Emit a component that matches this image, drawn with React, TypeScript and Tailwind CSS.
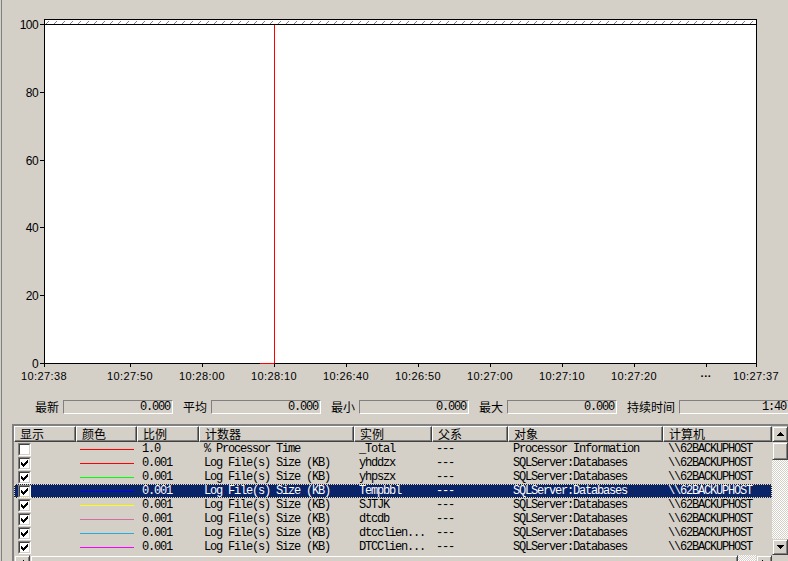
import clsx from "clsx";

type Row = {
  on: boolean;
  color: string;
  scale: string;
  counter: string;
  inst: string;
  obj: string;
  sel?: boolean;
};

const rows: Row[] = [
  { on: false, color: "bg-[#ff0000]", scale: "1.0", counter: "% Processor Time", inst: "_Total", obj: "Processor Information" },
  { on: true, color: "bg-[#ff0000]", scale: "0.001", counter: "Log File(s) Size (KB)", inst: "yhddzx", obj: "SQLServer:Databases" },
  { on: true, color: "bg-[#00ff00]", scale: "0.001", counter: "Log File(s) Size (KB)", inst: "yhpszx", obj: "SQLServer:Databases" },
  { on: true, color: "bg-[#0000ff]", scale: "0.001", counter: "Log File(s) Size (KB)", inst: "Tempbbl", obj: "SQLServer:Databases", sel: true },
  { on: true, color: "bg-[#ffff00]", scale: "0.001", counter: "Log File(s) Size (KB)", inst: "SJTJK", obj: "SQLServer:Databases" },
  { on: true, color: "bg-[#d070a0]", scale: "0.001", counter: "Log File(s) Size (KB)", inst: "dtcdb", obj: "SQLServer:Databases" },
  { on: true, color: "bg-[#20b0e0]", scale: "0.001", counter: "Log File(s) Size (KB)", inst: "dtcclien...", obj: "SQLServer:Databases" },
  { on: true, color: "bg-[#ff00ff]", scale: "0.001", counter: "Log File(s) Size (KB)", inst: "DTCClien...", obj: "SQLServer:Databases" },
];

const headers = ["显示", "颜色", "比例", "计数器", "实例", "父系", "对象", "计算机"];
const cols = "grid grid-cols-[62px_61px_62px_155px_78px_76px_155px_109px]";

const yTicks = [
  { y: 24, label: "100" },
  { y: 92, label: "80" },
  { y: 160, label: "60" },
  { y: 227, label: "40" },
  { y: 295, label: "20" },
  { y: 363, label: "0" },
];

const xTicks = [
  { x: 44, label: "10:27:38" },
  { x: 130, label: "10:27:50" },
  { x: 202, label: "10:28:00" },
  { x: 274, label: "10:28:10" },
  { x: 346, label: "10:26:40" },
  { x: 418, label: "10:26:50" },
  { x: 490, label: "10:27:00" },
  { x: 562, label: "10:27:10" },
  { x: 634, label: "10:27:20" },
  { x: 706, label: "···" },
  { x: 756, label: "10:27:37" },
];

const raised =
  "border border-t-[#d4d0c8] border-l-[#d4d0c8] border-b-[#404040] border-r-[#404040] shadow-[inset_1px_1px_0_#ffffff,inset_-1px_-1px_0_#808080] bg-[#d4d0c8]";
const checker =
  "bg-[image:repeating-conic-gradient(#ffffff_0%_25%,#d4d0c8_0%_50%)] bg-[length:2px_2px]";
const mono = "text-[12px] tracking-[-1.2px] font-['Liberation_Mono','Noto_Sans_CJK_SC',monospace]";

function Chart() {
  return (
    <svg
      width={786}
      height={400}
      viewBox="2 0 786 400"
      className="block shrink-0 font-['Liberation_Sans',sans-serif] text-[12px]"
    >
      <defs>
        <pattern id="hatch" x={45} y={20} width={8} height={4} patternUnits="userSpaceOnUse">
          <rect width={8} height={4} fill="#ffffff" />
          <path d="M1 4 L4 1" stroke="#808080" strokeWidth={1} />
        </pattern>
      </defs>
      <rect x={45} y={20} width={711} height={4} fill="url(#hatch)" />
      <rect x={45} y={25} width={711} height={338} fill="#ffffff" />
      <path d="M44.5 19 V363 M756.5 19 V363 M44 19.5 H757 M44 24.5 H757 M40 363.5 H757" stroke="#000" />
      {yTicks.map((t) => (
        <g key={t.label}>
          <path d={`M40 ${t.y + 0.5} H44`} stroke="#000" />
          <text x={38} y={t.y + 4.5} textAnchor="end" fill="#000" letterSpacing={-0.6}>
            {t.label}
          </text>
        </g>
      ))}
      {xTicks.map((t) => (
        <g key={t.x}>
          <path d={`M${t.x + 0.5} 364 V367`} stroke="#000" />
          <text
            x={t.x}
            y={380}
            textAnchor="middle"
            fill="#000"
            fontSize={11}
            fontWeight={t.label === "···" ? 700 : 400}
            letterSpacing={t.label === "···" ? 0 : 0.4}
          >
            {t.label}
          </text>
        </g>
      ))}
      <path d="M274.5 25 V363.5 M260 363.5 H274" stroke="#ff0000" />
    </svg>
  );
}

function Stat({ label, value, first }: { label: string; value: string; first?: boolean }) {
  return (
    <div className={clsx("flex items-center shrink-0", !first && "ml-[10px]")}>
      <span className="whitespace-nowrap text-[12px] leading-[14px] font-['Noto_Sans_CJK_SC',sans-serif] text-black">
        {label}
      </span>
      <div
        className={clsx(
          "ml-[4px] w-[110px] h-[14px] shrink-0 border border-t-[#808080] border-l-[#808080] border-b-white border-r-white text-right pr-[2px] leading-[12px]",
          mono
        )}
      >
        {value}
      </div>
    </div>
  );
}

function Checkbox({ on }: { on: boolean }) {
  return (
    <div className="w-[13px] h-[13px] border border-t-[#808080] border-l-[#808080] border-b-white border-r-white">
      <div className="w-full h-full border border-t-[#404040] border-l-[#404040] border-b-[#d4d0c8] border-r-[#d4d0c8] bg-white flex items-center justify-center">
        {on && (
          <svg width={7} height={7} viewBox="0 0 7 7">
            <path d="M6 0h1v3H6v1H5v1H4v1H3v1H2V6H1V5H0V2h1v1h1v1h1V3h1V2h1V1h1Z" fill="#000" />
          </svg>
        )}
      </div>
    </div>
  );
}

function Arrow({ dir }: { dir: "up" | "down" | "left" | "right" }) {
  const d = {
    up: "M3 0h1v1h1v1h1v1h1v1H0V3h1V2h1V1h1Z",
    down: "M0 0h7v1H6v1H5v1H4v1H3V3H2V2H1V1H0Z",
    left: "M3 0h1v7H3V6H2V5H1V4H0V3h1V2h1V1h1Z",
    right: "M0 0h1v1h1v1h1v1h1v1H3v1H2v1H1v1H0Z",
  }[dir];
  const vert = dir === "up" || dir === "down";
  return (
    <svg width={vert ? 7 : 4} height={vert ? 4 : 7} viewBox={vert ? "0 0 7 4" : "0 0 4 7"}>
      <path d={d} fill="#000" />
    </svg>
  );
}

export default function App() {
  return (
    <div className="w-[788px] h-[561px] overflow-hidden bg-[#d4d0c8] flex text-black">
      <div className="w-px shrink-0" />
      <div className="w-px shrink-0 bg-[#808080]" />
      <div className="flex flex-col w-[786px] shrink-0">
        <Chart />

        <div className="flex h-[14px] pl-[33px]">
          <Stat label="最新" value="0.000" first />
          <Stat label="平均" value="0.000" />
          <Stat label="最小" value="0.000" />
          <Stat label="最大" value="0.000" />
          <Stat label="持续时间" value="1:40" />
        </div>

        <div className="mt-[10px] ml-[10px] w-[778px] border-2 border-t-[#808080] border-l-[#808080] border-b-white border-r-white flex flex-col">
          <div className="flex h-[129px]">
            <div className="w-[758px] flex flex-col">
              <div className={clsx(cols, "h-[16px]")}>
                {headers.map((h) => (
                  <div
                    key={h}
                    className="border border-t-white border-l-white border-b-[#404040] border-r-[#404040] shadow-[inset_-1px_-1px_0_#808080] pl-[5px] text-[12px] leading-[14px] font-['Noto_Sans_CJK_SC',sans-serif] overflow-hidden whitespace-nowrap"
                  >
                    {h}
                  </div>
                ))}
              </div>
              {rows.map((r, i) => (
                <div
                  key={i}
                  className={clsx(
                    cols,
                    mono,
                    "h-[14px] leading-[14px] whitespace-pre",
                    r.sel && "bg-[#0a246a] text-white outline-1 outline-dotted -outline-offset-1 outline-[#f5db95]"
                  )}
                >
                  <div className="pl-[4px] pt-px">
                    <Checkbox on={r.on} />
                  </div>
                  <div className="pl-[4px] flex items-center">
                    <div className={clsx("h-px w-[54px]", r.color)} />
                  </div>
                  <div className="pl-[5px]">{r.scale}</div>
                  <div className="pl-[5px]">{r.counter}</div>
                  <div className="pl-[5px]">{r.inst}</div>
                  <div className="pl-[4px]">---</div>
                  <div className="pl-[5px]">{r.obj}</div>
                  <div className="pl-[5px]">{"\\\\62BACKUPHOST"}</div>
                </div>
              ))}
            </div>
            <div className="w-[16px] flex flex-col">
              <div className={clsx(raised, "h-[16px] flex items-center justify-center")}>
                <Arrow dir="up" />
              </div>
              <div className={clsx(raised, "h-[18px]")} />
              <div className={clsx(checker, "flex-1")} />
              <div className={clsx(raised, "h-[16px] flex items-center justify-center")}>
                <Arrow dir="down" />
              </div>
            </div>
          </div>
          <div className="flex h-[16px]">
            <div className={clsx(raised, "w-[16px] flex items-center justify-center")}>
              <Arrow dir="left" />
            </div>
            <div className={clsx(raised, "w-[708px]")} />
            <div className={clsx(checker, "w-[18px]")} />
            <div className={clsx(raised, "w-[16px] flex items-center justify-center")}>
              <Arrow dir="right" />
            </div>
            <div className="w-[16px] bg-[#d4d0c8]" />
          </div>
        </div>
      </div>
    </div>
  );
}
